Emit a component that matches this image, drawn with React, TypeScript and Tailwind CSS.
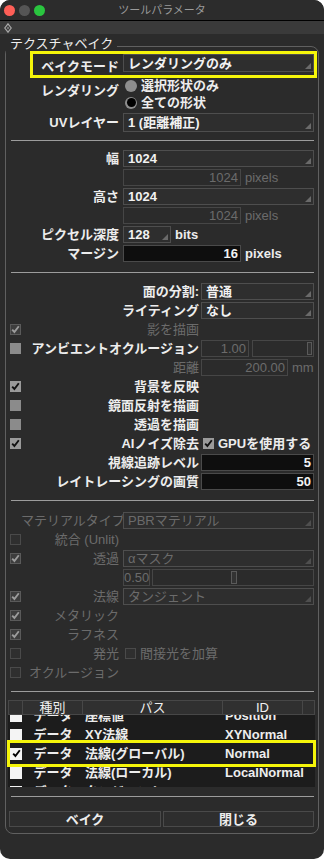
import React from 'react';

type CheckKind = 'on' | 'off' | 'dimOn' | 'dimOff' | 'white' | 'whiteOn';

const label = 'text-[13px] font-bold leading-none whitespace-nowrap text-[#ededed]';
const dimLabel = 'text-[13px] leading-none whitespace-nowrap text-[#6b6b6b]';

function Check({ kind }: { kind: CheckKind }) {
  const box: Record<CheckKind, string> = {
    on: 'h-[11px] w-[11px] bg-[#9a9a9a]',
    off: 'h-[11px] w-[11px] bg-[#8b8b8b]',
    dimOn: 'h-[11px] w-[11px] border border-[#5a5a5a] bg-[#3d3d3d]',
    dimOff: 'h-[11px] w-[11px] border border-[#4a4a4a] bg-[#2f2f2f]',
    white: 'h-[12px] w-[12px] bg-[#f4f4f4]',
    whiteOn: 'h-[12px] w-[12px] bg-[#f4f4f4]',
  };
  const mark = kind === 'on' ? '#111' : kind === 'dimOn' ? '#9c9c9c' : kind === 'whiteOn' ? '#000' : '';
  return (
    <span className={`flex shrink-0 items-center justify-center ${box[kind]}`}>
      {mark && (
        <svg width="9" height="9" viewBox="0 0 9 9">
          <path d="M1.2 4.6 L3.4 7 L7.8 1.2" fill="none" stroke={mark} strokeWidth="1.9" />
        </svg>
      )}
    </span>
  );
}

function Radio({ on = false }: { on?: boolean }) {
  return (
    <span className="flex h-[12px] w-[12px] shrink-0 items-center justify-center rounded-full bg-[#8e8e8e]">
      {on && <span className="h-[9px] w-[9px] rounded-full bg-black" />}
    </span>
  );
}

function Select({ value, className = '', dim = false }: { value: string; className?: string; dim?: boolean }) {
  return (
    <div className={`flex items-center border border-[#4e4e4e] bg-[#2e2e2e] pl-[4px] pr-[2px] ${className}`}>
      <span className={`flex-1 text-[13px] leading-none whitespace-nowrap ${dim ? 'text-[#6b6b6b]' : 'font-bold text-[#f2f2f2]'}`}>
        {value}
      </span>
      <svg width="6" height="6" viewBox="0 0 6 6" className="mb-[2px] self-end">
        <path d="M6 0 L6 6 L0 6 Z" fill={dim ? '#4f4f4f' : '#6a6a6a'} />
      </svg>
    </div>
  );
}

function Field({ value, className = '', dark = false }: { value: string; className?: string; dark?: boolean }) {
  return (
    <div
      className={`flex h-[17px] items-center justify-end border pr-[2px] ${
        dark ? 'border-[#4a4a4a] bg-[#0e0e0e]' : 'border-[#464646] bg-[#2b2b2b]'
      } ${className}`}
    >
      <span className={`text-[13px] leading-none ${dark ? 'font-bold text-[#f2f2f2]' : 'text-[#6b6b6b]'}`}>{value}</span>
    </div>
  );
}

function Sep() {
  return <div className="ml-[5px] h-px w-[303px] bg-[#9c9c9c]" />;
}

function TopRow({ name, children }: { name: string; children?: React.ReactNode }) {
  return (
    <div className="flex h-[19px] items-center">
      <div className={`w-[113px] text-right ${label}`}>{name}</div>
      <div className="ml-[4px] flex items-center">{children}</div>
    </div>
  );
}

function MidRow({
  check,
  name,
  dim = false,
  children,
}: {
  check?: CheckKind;
  name: string;
  dim?: boolean;
  children?: React.ReactNode;
}) {
  return (
    <div className="flex h-[19px] items-center">
      <div className="flex w-[15px] pl-[4px]">{check && <Check kind={check} />}</div>
      <div className={`w-[178px] text-right ${dim ? dimLabel : label}`}>{name}</div>
      <div className="ml-[2px] flex items-center">{children}</div>
    </div>
  );
}

function LowRow({ check, name, children }: { check?: CheckKind; name: string; children?: React.ReactNode }) {
  return (
    <div className="flex h-[19px] items-center">
      <div className="flex w-[15px] pl-[4px]">{check && <Check kind={check} />}</div>
      <div className={`w-[98px] text-right ${dimLabel}`}>{name}</div>
      <div className="ml-[4px] flex items-center">{children}</div>
    </div>
  );
}

const passes = [
  { on: false, path: '座標値', id: 'Position' },
  { on: false, path: 'XY法線', id: 'XYNormal' },
  { on: true, path: '法線(グローバル)', id: 'Normal' },
  { on: false, path: '法線(ローカル)', id: 'LocalNormal' },
  { on: false, path: 'タンジェント', id: 'Tangent' },
];

export default function App() {
  return (
    <div className="min-h-screen bg-white [font-family:Liberation_Sans,Noto_Sans_CJK_JP,sans-serif]">
      <div className="flex h-[859px] w-[324px] flex-col overflow-hidden rounded-[10px] bg-[#2b2b2b]">
        {/* title bar */}
        <div className="flex h-[20px] items-center bg-[#2c2c2c]">
          <div className="flex w-[48px] gap-[4px] pl-[4px]">
            <span className="h-[11px] w-[11px] rounded-full bg-[#fe5f57]" />
            <span className="h-[11px] w-[11px] rounded-full bg-[#555555]" />
            <span className="h-[11px] w-[11px] rounded-full bg-[#2ac53f]" />
          </div>
          <div className="flex-1 text-center text-[11px] leading-none text-[#9a9a9a]">ツールパラメータ</div>
          <div className="w-[48px]" />
        </div>
        <div className="h-px bg-black" />
        <div className="flex h-[13px] items-center bg-[#3a3a3a] pl-[4px]">
          <svg width="8" height="10" viewBox="0 0 8 10">
            <path d="M4 0.8 L7.2 5 L4 9.2 L0.8 5 Z" fill="none" stroke="#a8a8a8" strokeWidth="1.2" />
            <path d="M4 3.4 L5.2 5 L4 6.6 L2.8 5 Z" fill="#8a8a8a" />
          </svg>
        </div>

        <fieldset className="mx-[5px] mt-[3px] min-w-0 rounded-[8px] border border-[#606060] pb-[6px]">
          <legend className="px-[4px] pb-[5px] text-[13px] leading-[14px] text-[#eeeeee]">テクスチャベイク</legend>

          {/* bake mode (highlighted) */}
          <div className="ml-[24px] mt-[-5px] flex h-[27px] w-[287px] items-start border-[3px] border-[#f5f50a]">
            <div className={`mt-[6px] w-[86px] text-right ${label}`}>ベイクモード</div>
            <Select value="レンダリングのみ" className="ml-[4px] h-[18px] w-[191px]" />
          </div>

          {/* rendering */}
          <div className="mt-[-1px] flex">
            <div className={`w-[113px] pt-[7px] text-right ${label}`}>レンダリング</div>
            <div className="ml-[6px] flex flex-col">
              <div className="flex h-[17px] items-center gap-[4px]">
                <Radio />
                <span className={label}>選択形状のみ</span>
              </div>
              <div className="flex h-[17px] items-center gap-[4px]">
                <Radio on />
                <span className={label}>全ての形状</span>
              </div>
            </div>
          </div>

          <div className="flex h-[22px] items-center">
            <div className={`w-[113px] text-right ${label}`}>UVレイヤー</div>
            <Select value="1 (距離補正)" className="ml-[4px] h-[19px] w-[191px]" />
          </div>

          <div className="mt-[7px]">
            <Sep />
          </div>

          <div className="mt-[8px]">
            <TopRow name="幅">
              <Select value="1024" className="h-[17px] w-[191px]" />
            </TopRow>
            <TopRow name="">
              <Field value="1024" className="w-[118px]" />
              <span className="ml-[4px] text-[13px] leading-none text-[#6b6b6b]">pixels</span>
            </TopRow>
            <TopRow name="高さ">
              <Select value="1024" className="h-[17px] w-[191px]" />
            </TopRow>
            <TopRow name="">
              <Field value="1024" className="w-[118px]" />
              <span className="ml-[4px] text-[13px] leading-none text-[#6b6b6b]">pixels</span>
            </TopRow>
            <TopRow name="ピクセル深度">
              <Select value="128" className="h-[17px] w-[48px]" />
              <span className={`ml-[4px] ${label}`}>bits</span>
            </TopRow>
            <TopRow name="マージン">
              <Field value="16" dark className="w-[118px]" />
              <span className={`ml-[4px] ${label}`}>pixels</span>
            </TopRow>
          </div>

          <div className="mt-[9px]">
            <Sep />
          </div>

          <div className="mt-[9px]">
            <MidRow name="面の分割:">
              <Select value="普通" className="h-[17px] w-[113px]" />
            </MidRow>
            <MidRow name="ライティング">
              <Select value="なし" className="h-[17px] w-[113px]" />
            </MidRow>
            <MidRow check="dimOn" name="影を描画" dim />
            <MidRow check="off" name="アンビエントオクルージョン">
              <Field value="1.00" className="w-[48px]" />
              <div className="ml-[3px] flex h-[17px] w-[62px] items-center justify-end border border-[#464646] bg-[#2b2b2b] pr-[1px]">
                <span className="h-[13px] w-[5px] border border-[#5a5a5a] bg-[#333333]" />
              </div>
            </MidRow>
            <MidRow name="距離" dim>
              <Field value="200.00" className="w-[87px]" />
              <span className="ml-[4px] text-[13px] leading-none text-[#6b6b6b]">mm</span>
            </MidRow>
            <MidRow check="on" name="背景を反映" />
            <MidRow check="off" name="鏡面反射を描画" />
            <MidRow check="off" name="透過を描画" />
            <MidRow check="on" name="AIノイズ除去">
              <span className="ml-[2px]">
                <Check kind="on" />
              </span>
              <span className={`ml-[4px] ${label}`}>GPUを使用する</span>
            </MidRow>
            <MidRow name="視線追跡レベル">
              <Field value="5" dark className="w-[113px]" />
            </MidRow>
            <MidRow name="レイトレーシングの画質">
              <Field value="50" dark className="w-[113px]" />
            </MidRow>
          </div>

          <div className="mt-[9px]">
            <Sep />
          </div>

          <div className="mt-[10px]">
            <LowRow name="マテリアルタイプ">
              <Select value="PBRマテリアル" dim className="h-[17px] w-[191px]" />
            </LowRow>
            <LowRow check="dimOff" name="統合 (Unlit)" />
            <LowRow check="dimOn" name="透過">
              <Select value="αマスク" dim className="h-[17px] w-[191px]" />
            </LowRow>
            <LowRow name="">
              <div className="flex h-[17px] w-[27px] items-center border border-[#464646] bg-[#2b2b2b]">
                <span className="text-[13px] leading-none text-[#6b6b6b]">0.50</span>
              </div>
              <div className="ml-[2px] flex h-[17px] w-[162px] items-center border border-[#464646] bg-[#2b2b2b] pl-[78px]">
                <span className="h-[13px] w-[6px] border border-[#5a5a5a] bg-[#333333]" />
              </div>
            </LowRow>
            <LowRow check="dimOn" name="法線">
              <Select value="タンジェント" dim className="h-[17px] w-[191px]" />
            </LowRow>
            <LowRow check="dimOn" name="メタリック" />
            <LowRow check="dimOn" name="ラフネス" />
            <LowRow check="dimOff" name="発光">
              <span className="ml-[2px]">
                <Check kind="dimOff" />
              </span>
              <span className={`ml-[4px] ${dimLabel}`}>間接光を加算</span>
            </LowRow>
            <LowRow check="dimOff" name="オクルージョン" />
          </div>

          <div className="mt-[9px]">
            <Sep />
          </div>

          {/* pass table */}
          <div className="relative ml-[2px] mt-[8px] w-[307px]">
            <div className="flex h-[15px] bg-[#303030] text-[13px] leading-none text-[#f0f0f0]">
              <div className="w-[15px] border border-[#474747]" />
              <div className="flex w-[60px] items-center justify-center border border-l-0 border-[#474747]">種別</div>
              <div className="flex w-[140px] items-center justify-center border border-l-0 border-[#474747]">パス</div>
              <div className="flex w-[80px] items-center justify-center border border-l-0 border-[#474747]">ID</div>
              <div className="flex-1 border border-l-0 border-[#474747]" />
            </div>
            <div className="h-[72px] overflow-hidden bg-[#1c1c1c]">
              <div className="mt-[-9px]">
                {passes.map((p) => (
                  <div key={p.id} className={`flex h-[19px] items-center ${label}`}>
                    <div className="flex w-[15px] pl-[2px]">
                      <Check kind={p.on ? 'whiteOn' : 'white'} />
                    </div>
                    <div className="w-[60px] text-center">データ</div>
                    <div className="w-[140px] pl-[2px]">{p.path}</div>
                    <div className="pl-[2px]">{p.id}</div>
                  </div>
                ))}
              </div>
            </div>
            <div className="pointer-events-none absolute left-[-1px] top-[40px] h-[27px] w-[309px] border-[3px] border-[#f5f50a]" />
          </div>

          <div className="mt-[9px]">
            <Sep />
          </div>

          <div className="ml-[3px] mt-[14px] flex gap-[2px]">
            <button className={`h-[16px] w-[152px] border border-[#4a4a4a] bg-[#2e2e2e] ${label}`}>ベイク</button>
            <button className={`h-[16px] w-[151px] border border-[#4a4a4a] bg-[#2e2e2e] ${label}`}>閉じる</button>
          </div>
        </fieldset>
      </div>
    </div>
  );
}
